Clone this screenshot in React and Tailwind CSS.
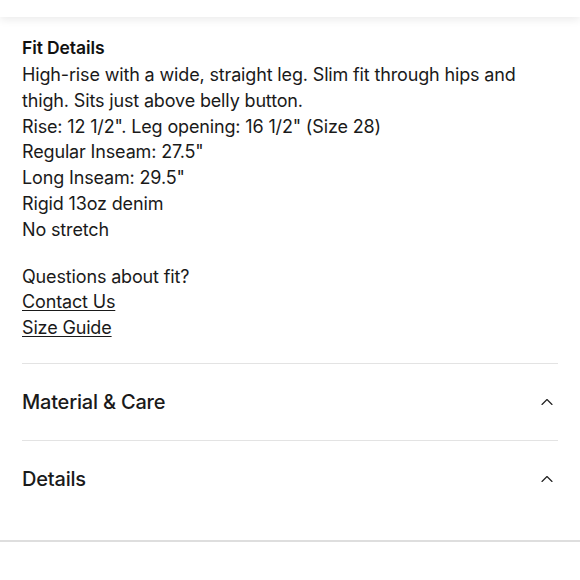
import { ChevronUp } from "lucide-react";

const fitLines = [
  "High-rise with a wide, straight leg. Slim fit through hips and thigh. Sits just above belly button.",
  "Rise: 12 1/2\". Leg opening: 16 1/2\" (Size 28)",
  "Regular Inseam: 27.5\"",
  "Long Inseam: 29.5\"",
  "Rigid 13oz denim",
  "No stretch",
];

function AccordionRow({ title }) {
  return (
    <div className="border-t border-[#e3e3e3] h-[77px] flex items-center justify-between">
      <span className="text-[20px] font-medium text-[#1a1a1a] tracking-[-0.2px]">{title}</span>
      <ChevronUp className="w-[20px] h-[20px] text-[#222] mr-[1px]" strokeWidth={1.4} />
    </div>
  );
}

export default function App() {
  return (
    <div className="w-[580px] h-[580px] bg-white overflow-hidden" style={{ fontFamily: "Inter, 'Noto Sans', sans-serif" }}>
      {/* barre du haut */}
      <div className="h-[17px] bg-white shadow-[0_3px_8px_rgba(0,0,0,0.08)] relative z-10" />

      <div className="px-[22px] pt-[19px]">
        <h3 className="text-[17.5px] font-semibold text-[#111] leading-[23px] tracking-[-0.1px]">Fit Details</h3>
        <div className="mt-[3px] text-[18px] leading-[25.8px] text-[#1a1a1a] tracking-[-0.15px]">
          {fitLines.map((l, i) => (
            <p key={i}>{l}</p>
          ))}
          <p className="mt-[21px]">Questions about fit?</p>
          <p><a className="underline underline-offset-2">Contact Us</a></p>
          <p><a className="underline underline-offset-2">Size Guide</a></p>
        </div>

        <div className="mt-[22px]">
          <AccordionRow title="Material & Care" />
          <AccordionRow title="Details" />
        </div>
      </div>

      <div className="mt-[23px] border-t-2 border-[#dedede]" />
    </div>
  );
}
